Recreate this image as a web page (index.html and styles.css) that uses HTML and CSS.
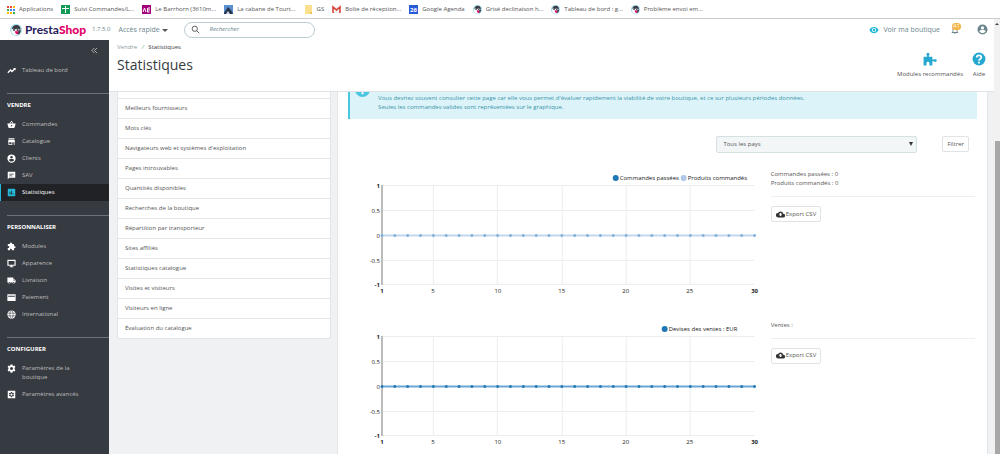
FILE: index.html
```html
<!DOCTYPE html>
<html lang="fr">
<head>
  <meta charset="UTF-8" />
  <title>Statistiques • PrestaShop</title>
  <link rel="stylesheet" href="styles.css">
</head>
<body>
  <svg class="sprite" aria-hidden="true">
    <symbol id="presta" viewBox="0 0 24 24">
      <circle cx="12" cy="12" r="12" fill="#a4dbe8" />
      <path d="M4 9c1-5 5-7 9-7 5 0 8 4 8 9l-3 3H6z" fill="#3b3b45" />
      <path d="M3 11c3-2 5-2 7 0 3-2 7-2 10 1l-2 8c-3 3-9 3-12 1-3-3-4-6-3-10z" fill="#fff" />
      <circle cx="8" cy="12" r="2" fill="#3b3b45" />
      <circle cx="15" cy="12" r="2" fill="#3b3b45" />
      <path d="M10 14l8 1-2 6-5-2z" fill="#df0067" />
      <path d="M17 12l5 1-3 7-3 1z" fill="#3b3b45" />
    </symbol>
    <symbol id="cloud" viewBox="0 0 24 24">
      <path fill-rule="evenodd" d="M19.4 10A7.5 7.5 0 0 0 5.400 8 6 6 0 0 0 6 20h13a5 5 0 0 0 .4-10zM10 16v-4H7l5-5 5 5h-3v4z" />
    </symbol>
  </svg>

  <nav class="bookmarks">
    <a href="#"><svg viewBox="0 0 9 9"><path fill="#ea4335" d="M1 1h2v2H1zM4 1h2v2H4z" /><path fill="#fbbc05" d="M7 1h2v2H7zM1 7h2v2H1zM4 7h2v2H4z" /><path fill="#34a853" d="M1 4h2v2H1zM7 7h2v2H7z" /><path fill="#4285f4" d="M4 4h2v2H4zM7 4h2v2H7z" /></svg>Applications</a>
    <a href="#"><svg viewBox="0 0 9 9"><path fill="#149a57" d="M0 0h9v9H0z" /><path fill="#fff" d="M4 1h1v2h3v1H5v4H4V4H1V3h3z" /></svg>Suivi Commandes/L...</a>
    <a href="#"><svg viewBox="0 0 9 9"><path fill="#a3007c" d="M0 0h9v9H0z" /><path fill="none" stroke="#fff" d="M1 7l1.500-4L4 7M5.500 3v4h2M7 2v4" /></svg>Le Barrhorn (3610m...</a>
    <a href="#"><svg viewBox="0 0 9 9"><path fill="#5a8fd0" d="M0 0h9v9H0z" /><path fill="#27344a" d="M0 8l4-6 3 3 2 4H0z" /><path fill="#cdd9e8" d="M2 9l2-3 2 3z" /></svg>La cabane de Tourt...</a>
    <a href="#"><svg viewBox="0 0 9 9"><path fill="#fbe08d" d="M1 0h7v9H1z" /><path fill="#eac25c" d="M6 7h2v2H6z" /></svg>GS</a>
    <a href="#"><svg viewBox="0 0 9 9"><path fill="#eee" d="M1 2h7v6H1z" /><path fill="none" stroke="#d93f33" stroke-width="1.500" d="M1 8V2l3.500 3L8 2v6" /></svg>Boîte de réception...</a>
    <a href="#"><svg viewBox="0 0 9 9"><path fill="#2a5bd7" d="M0 0h9v9H0z" /><text x="1" y="7" font-size="6" font-weight="700" fill="#fff">26</text></svg>Google Agenda</a>
    <a href="#"><svg><use href="#presta" /></svg>Grisé declinaison h...</a>
    <a href="#"><svg><use href="#presta" /></svg>Tableau de bord : g...</a>
    <a href="#"><svg><use href="#presta" /></svg>Problème envoi em...</a>
  </nav>

  <div class="window">
    <div class="app">
      <header class="topbar">
        <a class="logo" href="#"><svg><use href="#presta" /></svg><span>Presta<b>Shop</b></span></a>
        <span class="version">1.7.5.0</span>
        <button class="quick">Accès rapide <i class="caret"></i></button>
        <label class="search">
          <svg viewBox="0 0 24 24"><path fill="none" stroke="currentColor" stroke-width="2.500" d="M15 15l7 7M10 3a7 7 0 1 0 0 14 7 7 0 0 0 0-14z" /></svg>
          <input type="search" placeholder="Rechercher" aria-label="Rechercher" />
        </label>
        <a class="shop" href="#"><svg viewBox="0 0 24 24"><path d="M12 4.500C7 4.500 2.700 7.600 1 12c1.700 4.400 6 7.500 11 7.500s9.300-3.100 11-7.500c-1.700-4.400-6-7.500-11-7.500zM12 17a5 5 0 1 1 0-10 5 5 0 0 1 0 10zm0-8a3 3 0 1 0 0 6 3 3 0 0 0 0-6z" /></svg>Voir ma boutique</a>
        <button class="bell" aria-label="Notifications">
          <svg viewBox="0 0 24 24"><path d="M12 22a2 2 0 0 0 2-2h-4a2 2 0 0 0 2 2zm6-6v-5c0-3-1.600-5.600-4.500-6.300V4a1.500 1.500 0 0 0-3 0v.7C7.600 5.400 6 7.900 6 11v5l-2 2v1h16v-1zm-2 1H8v-6c0-2.500 1.500-4.500 4-4.500s4 2 4 4.500z" /></svg>
          <span class="badge">41</span>
        </button>
        <button class="user" aria-label="Mon compte"><svg viewBox="0 0 24 24"><path d="M12 1a11 11 0 1 0 0 22 11 11 0 0 0 0-22zm0 4a3.500 3.500 0 1 1 0 7 3.500 3.500 0 0 1 0-7zm0 15c-3 0-5.500-1.400-7-4 0-2.200 4.700-3 7-3s7 .8 7 3c-1.500 2.600-4 4-7 4z" /></svg></button>
      </header>

      <div class="body">
        <aside class="sidebar">
          <button class="collapse" aria-label="Réduire le menu"><svg viewBox="0 0 8 8"><path fill="none" stroke="currentColor" d="M4 1L1 4l3 3M7 1L4 4l3 3" /></svg></button>
          <a class="item" href="#"><svg viewBox="0 0 24 24"><path d="M16 5l2.300 2.300-4.900 4.900-4-4L1 16.600 3.400 19l6-6 4 4 7.300-7.300L23 12V5z" /></svg>Tableau de bord</a>

          <section>
            <h2>VENDRE</h2>
            <a class="item" href="#"><svg viewBox="0 0 24 24"><path d="M17.200 9l-4.400-6.600a1 1 0 0 0-1.600 0L6.800 9H2c-.6 0-1 .4-1 1l2.600 9.500A2 2 0 0 0 5.500 21h13a2 2 0 0 0 1.900-1.500L23 10c0-.6-.5-1-1-1zM9 9l3-4.400L15 9zm3 8a2 2 0 1 1 0-4 2 2 0 0 1 0 4z" /></svg>Commandes</a>
            <a class="item" href="#"><svg viewBox="0 0 24 24"><path d="M20 3H4v3h16zm1 11v-2l-1-5H4l-1 5v2h1v7h10v-7h4v7h2v-7zm-9 5H6v-5h6z" /></svg>Catalogue</a>
            <a class="item" href="#"><svg viewBox="0 0 24 24"><path d="M12 1a11 11 0 1 0 0 22 11 11 0 0 0 0-22zm0 4a3.500 3.500 0 1 1 0 7 3.500 3.500 0 0 1 0-7zm0 15c-3 0-5.500-1.400-7-4 0-2.200 4.700-3 7-3s7 .8 7 3c-1.500 2.600-4 4-7 4z" /></svg>Clients</a>
            <a class="item" href="#"><svg viewBox="0 0 24 24"><path d="M2 2v20l4-4h16V2zm4 5h12v2H6zm8 7H6v-2h8z" /></svg>SAV</a>
            <a class="item active" href="#"><svg viewBox="0 0 24 24"><path d="M4 2a2 2 0 0 0-2 2v16c0 1.100.9 2 2 2h16a2 2 0 0 0 2-2V4a2 2 0 0 0-2-2zm5 15H7v-7h2zm4 0h-2V7h2zm4 0h-2v-4h2z" /></svg>Statistiques</a>
          </section>

          <section>
            <h2>PERSONNALISER</h2>
            <a class="item" href="#"><svg viewBox="0 0 24 24"><path d="M20.500 11H19V7a2 2 0 0 0-2-2h-4V3.500a2.500 2.500 0 0 0-5 0V5H4a2 2 0 0 0-2 2v3.800h1.500a2.700 2.700 0 0 1 0 5.400H2V20c0 1.100.9 2 2 2h3.800v-1.500a2.700 2.700 0 0 1 5.400 0V22H17a2 2 0 0 0 2-2v-4h1.500a2.500 2.500 0 0 0 0-5z" /></svg>Modules</a>
            <a class="item" href="#"><svg viewBox="0 0 24 24"><path fill-rule="evenodd" d="M1 2h22v16h-9v2h3v2H7v-2h3v-2H1zm3 3v10h16V5z" /></svg>Apparence</a>
            <a class="item" href="#"><svg viewBox="0 0 24 24"><path d="M20 8h-3V4H1v13h2a3 3 0 0 0 6 0h6a3 3 0 0 0 6 0h2v-5zM6 18.500a1.500 1.500 0 1 1 0-3 1.500 1.500 0 0 1 0 3zm13.500-9l2 2.500H17V9.500zm-1.500 9a1.500 1.500 0 1 1 0-3 1.500 1.500 0 0 1 0 3z" /></svg>Livraison</a>
            <a class="item" href="#"><svg viewBox="0 0 24 24"><path fill-rule="evenodd" d="M1 3h22v18H1zm2 4v3h18V7z" /></svg>Paiement</a>
            <a class="item" href="#"><svg viewBox="0 0 24 24"><circle cx="12" cy="12" r="11" /><g fill="none" stroke="#363a41" stroke-width="1.500"><ellipse cx="12" cy="12" rx="4.500" ry="10" /><path d="M2 8.500h20M2 15.500h20" /></g></svg>International</a>
          </section>

          <section>
            <h2>CONFIGURER</h2>
            <a class="item" href="#"><svg viewBox="0 0 24 24"><path fill-rule="evenodd" d="M9.500 1h5l.6 3 2 1.100L20 4l2.500 4.300-2.300 2v3.400l2.300 2L20 20l-2.900-1.100-2 1.100-.6 3h-5l-.6-3-2-1.100L4 20l-2.500-4.300 2.300-2v-3.400l-2.300-2L4 4l2.900 1.100 2-1.100zM12 8a4 4 0 1 0 0 8 4 4 0 0 0 0-8z" /></svg>Paramètres de la boutique</a>
            <a class="item" href="#"><svg viewBox="0 0 24 24"><path fill-rule="evenodd" d="M2 2h20v20H2zm8.500 3l-.4 2-1.300.8-2-.7L5.300 9.700 6.800 11v2l-1.500 1.300 1.500 2.600 2-.7 1.300.8.400 2h3l.4-2 1.300-.8 2 .7 1.500-2.600-1.500-1.300v-2l1.500-1.300-1.500-2.600-2 .7-1.300-.8-.4-2zM12 9a3 3 0 1 1 0 6 3 3 0 0 1 0-6z" /></svg>Paramètres avancés</a>
          </section>
        </aside>

        <main class="main">
          <div class="page-head">
            <div>
              <nav class="breadcrumb"><a href="#">Vendre</a> <i>/</i> <a class="current" href="#">Statistiques</a></nav>
              <h1>Statistiques</h1>
            </div>
            <div class="actions">
              <a href="#"><svg viewBox="0 0 24 24"><path d="M1 8h6V6a2.500 2.500 0 1 1 3 0v2h6v5h3a2.500 2.500 0 1 1 0 3h-3v7h-5v-4a2.500 2.500 0 0 0-5 0v4H1z" /></svg>Modules recommandés</a>
              <a href="#"><svg viewBox="0 0 24 24"><circle cx="12" cy="12" r="11" /><path fill="none" stroke="#fff" stroke-width="3" d="M8 9.500c0-5 8-5 8-.5 0 3-4 3-4 6M12 16.500v3" /></svg>Aide</a>
            </div>
          </div>

          <div class="content">
            <ul class="stats">
              <li><a href="#">Meilleurs fournisseurs</a></li>
              <li><a href="#">Mots clés</a></li>
              <li><a href="#">Navigateurs web et systèmes d'exploitation</a></li>
              <li><a href="#">Pages introuvables</a></li>
              <li><a href="#">Quantités disponibles</a></li>
              <li><a href="#">Recherches de la boutique</a></li>
              <li><a href="#">Répartition par transporteur</a></li>
              <li><a href="#">Sites affiliés</a></li>
              <li><a href="#">Statistiques catalogue</a></li>
              <li><a href="#">Visites et visiteurs</a></li>
              <li><a href="#">Visiteurs en ligne</a></li>
              <li><a href="#">Évaluation du catalogue</a></li>
            </ul>

            <div class="panel">
              <div class="alert">
                <svg viewBox="0 0 16 16"><circle cx="8" cy="8" r="8" /><path fill="#fff" d="M7 3h2v2H7zM7 6h2v7H7z" /></svg>
                <p>Vous devriez souvent consulter cette page car elle vous permet d'évaluer rapidement la viabilité de votre boutique, et ce sur plusieurs périodes données.<br>Seules les commandes valides sont représentées sur le graphique.</p>
              </div>

              <form class="filter">
                <div class="select"><select aria-label="Pays"><option>Tous les pays</option></select></div>
                <button type="button" class="btn">Filtrer</button>
              </form>

              <div class="row">
                <svg class="chart" viewBox="0 0 413 131">
                  <path class="grid" d="M34 15.500h373M34 40.500h373M34 65.500h373M34 90.500h373M34 114.500h373M85.500 15v100M149.500 15v100M214.500 15v100M278.500 15v100M342.500 15v100" />
                  <path class="axis" d="M34 15v100" />
                  <path class="line light" d="M34 65.500h373" />
                  <path class="dots light" d="M34 65.500h373.100" />
                  <g class="y"><text class="b" x="32" y="18">1</text><text x="32" y="43">0.5</text><text x="32" y="68">0</text><text x="32" y="93">-0.5</text><text class="b" x="32" y="117">-1</text></g>
                  <g class="x"><text class="b" x="34" y="123">1</text><text x="85" y="123">5</text><text x="150" y="123">10</text><text x="214" y="123">15</text><text x="278" y="123">20</text><text x="342" y="123">25</text><text class="b" x="407" y="123">30</text></g>
                  <text x="272" y="10">Commandes passées</text><text x="340" y="10">Produits commandés</text>
                  <circle cx="268" cy="8" r="3" fill="#1f77b4" /><circle cx="336" cy="8" r="3" fill="#aec7e8" />
                </svg>
                <div class="side">
                  <p>Commandes passées : 0<br>Produits commandés : 0</p>
                  <hr>
                  <button class="btn"><svg><use href="#cloud" /></svg>Export CSV</button>
                </div>
              </div>

              <div class="row">
                <svg class="chart" viewBox="0 0 413 131">
                  <path class="grid" d="M34 15.500h373M34 40.500h373M34 65.500h373M34 90.500h373M34 114.500h373M85.500 15v100M149.500 15v100M214.500 15v100M278.500 15v100M342.500 15v100" />
                  <path class="axis" d="M34 15v100" />
                  <path class="line" d="M34 65.500h373" />
                  <path class="dots" d="M34 65.500h373.100" />
                  <g class="y"><text class="b" x="32" y="18">1</text><text x="32" y="43">0.5</text><text x="32" y="68">0</text><text x="32" y="93">-0.5</text><text class="b" x="32" y="117">-1</text></g>
                  <g class="x"><text class="b" x="34" y="123">1</text><text x="85" y="123">5</text><text x="150" y="123">10</text><text x="214" y="123">15</text><text x="278" y="123">20</text><text x="342" y="123">25</text><text class="b" x="407" y="123">30</text></g>
                  <text x="321" y="10">Devises des ventes : EUR</text>
                  <circle cx="317" cy="8" r="3" fill="#1f77b4" />
                </svg>
                <div class="side">
                  <p>Ventes :</p>
                  <hr>
                  <button class="btn"><svg><use href="#cloud" /></svg>Export CSV</button>
                </div>
              </div>
            </div>
          </div>
        </main>
      </div>
    </div>

    <div class="scrollbar"><i class="arrow"></i><i class="thumb"></i></div>
  </div>
</body>
</html>
```
FILE: styles.css
```css
* { box-sizing: border-box; }
body {
  margin: 0;
  height: 100vh;
  display: flex;
  flex-direction: column;
  overflow: hidden;
  font-family: "Open Sans", sans-serif;
  font-size: 6px;
  line-height: 9px;
  color: #555;
  background: #fff;
}
a { color: inherit; text-decoration: none; }
button, input, select {
  font: inherit;
  color: inherit;
  margin: 0;
  padding: 0;
  border: 0;
  background: none;
}
svg { flex: none; fill: currentColor; }
h1, h2, p, ul { margin: 0; padding: 0; }
.sprite { display: none; }

/* bookmarks */
.bookmarks {
  display: flex;
  align-items: center;
  gap: 8px;
  height: 19px;
  padding-left: 6px;
  border-bottom: 1px solid #ccc;
  white-space: nowrap;
}
.bookmarks a { display: flex; align-items: center; gap: 4px; }
.bookmarks svg { width: 9px; height: 9px; }

.window { flex: 1; display: flex; min-height: 0; }
.app { flex: 1; display: flex; flex-direction: column; min-width: 0; }

/* top bar */
.topbar {
  display: flex;
  align-items: center;
  height: 21px;
  padding: 0 6px 0 10px;
  color: #6c868e;
  font-size: 7px;
}
.logo {
  display: flex;
  align-items: center;
  gap: 3px;
  font: 700 12px/14px Lato, sans-serif;
  color: #251b5b;
}
.logo svg { width: 12px; height: 12px; }
.logo b { color: #df0067; }
.version { margin-left: 6px; font-size: 6px; }
.quick { margin-left: 8px; }
.caret {
  display: inline-block;
  border: 3px solid transparent;
  border-top-color: #555;
  border-bottom: 0;
  vertical-align: middle;
}
.search {
  display: flex;
  align-items: center;
  gap: 10px;
  width: 131px;
  height: 16px;
  margin-left: 16px;
  padding: 0 6px;
  border: 1px solid #bbcdd2;
  border-radius: 8px;
}
.search svg { width: 9px; height: 9px; color: #555; }
.search input { flex: 1; min-width: 0; outline: 0; font-size: 6px; font-style: italic; }
.search input::placeholder { color: #6c868e; }
.shop { display: flex; align-items: center; gap: 4px; margin-left: auto; }
.shop svg { width: 10px; height: 10px; color: #25b9d7; }
.bell { position: relative; height: 12px; margin-left: 10px; }
.bell svg { display: block; width: 10px; height: 12px; }
.badge {
  position: absolute;
  top: -1px;
  left: 2px;
  padding: 0 1px;
  border-radius: 4px;
  background: #f5b342;
  color: #fff;
  font-size: 6px;
  line-height: 7px;
}
.user { margin-left: 17px; }
.user svg { display: block; width: 11px; height: 11px; }

.body { flex: 1; display: flex; min-height: 0; }

/* side menu */
.sidebar {
  width: 109px;
  flex: none;
  background: #363a41;
  color: #bebebe;
}
.collapse { display: block; margin: 7px 11px 8px auto; }
.collapse svg { display: block; width: 7px; height: 7px; }
.item {
  display: flex;
  gap: 6px;
  padding: 4px 26px 4px 7px;
}
.item svg { width: 9px; height: 9px; color: #fff; }
.item.active {
  padding-left: 6px;
  border-left: 1px solid #25b9d7;
  background: #202226;
  color: #fff;
}
.item.active svg { color: #25b9d7; }
.sidebar section {
  margin-top: 14px;
  background: linear-gradient(#6c737c, #6c737c) 7px 0 / 100% 1px no-repeat;
}
.sidebar h2 {
  padding: 8px 0 6px 7px;
  font-size: 6px;
  line-height: 9px;
  font-weight: 700;
  color: #fff;
}

/* page header */
.main { flex: 1; display: flex; flex-direction: column; min-width: 0; }
.page-head {
  display: flex;
  justify-content: space-between;
  height: 52px;
  flex: none;
  padding: 3px 8px 0;
  border-bottom: 1px solid #dfe3e5;
}
.breadcrumb a { color: #8a9a9f; }
.breadcrumb .current { color: #363a41; }
.breadcrumb i { margin: 0 3px; color: #5fa85c; }
.page-head h1 { margin-top: 4px; font-size: 14px; line-height: 18px; font-weight: 400; color: #363a41; }
.actions { display: flex; gap: 9px; padding-top: 9px; }
.actions a { display: flex; flex-direction: column; align-items: center; gap: 4px; }
.actions svg { width: 14px; height: 14px; color: #25a8d0; }

/* content, scrolled under the header */
.content {
  flex: 1;
  display: grid;
  grid-template-columns: 25fr 76fr;
  align-items: start;
  gap: 6px;
  min-height: 0;
  padding: 0 6px 0 8px;
  overflow: hidden;
  background: #eff1f2;
}
.stats {
  padding-top: 6px;
  list-style: none;
  background: #fff;
  border: 1px solid #e3e6e8;
  border-top: 0;
  border-radius: 0 0 3px 3px;
}
.stats li { border-top: 1px solid #e3e6e8; }
.stats a { display: block; padding: 5px 7px; }
.panel {
  min-width: 0;
  padding: 0 10px;
  border: solid #e3e6e8;
  border-width: 0 1px;
  background: #fff;
}
.alert {
  display: flex;
  gap: 8px;
  height: 27px;
  padding: 2px 5px;
  border-left: 2px solid #4ac7e0;
  background: #dcf4f9;
  color: #3a93a8;
}
.alert svg { width: 15px; height: 15px; margin-top: -12px; color: #4ac7e0; }
.filter { display: flex; justify-content: flex-end; gap: 25px; padding: 17px 8px; }
.select { position: relative; width: 201px; }
.select::after {
  content: "";
  position: absolute;
  top: 6px;
  right: 4px;
  border: 2px solid transparent;
  border-top: 4px solid #333;
  border-bottom: 0;
  pointer-events: none;
}
.filter select {
  display: block;
  width: 100%;
  height: 17px;
  padding: 0 6px;
  appearance: none;
  border: 1px solid #d5e0e3;
  border-radius: 2px;
  background: #f3f6f7;
}
.btn {
  display: inline-flex;
  align-items: center;
  gap: 1px;
  height: 16px;
  padding: 0 4px;
  border: 1px solid #e0e2e4;
  border-radius: 2px;
  background: #fff;
}
.btn svg { width: 9px; height: 9px; color: #333; }
.row {
  display: grid;
  grid-template-columns: 2fr 1fr;
  gap: 10px;
  margin-bottom: 20px;
}
.side hr { margin: 8px 2px 9px 0; border: 0; border-top: 1px solid #eee; }

/* charts */
.chart { display: block; width: 100%; fill: #222; font-size: 6px; }
.chart .grid { fill: none; stroke: #ececec; }
.chart .axis { stroke: #bbb; stroke-width: 2; }
.chart .line { stroke: #6ba6d3; stroke-width: 2; }
.chart .line.light { stroke: #c3d7ef; }
.chart .dots {
  stroke: #1f77b4;
  stroke-width: 3;
  stroke-linecap: round;
  stroke-dasharray: 0 12.862;
}
.chart .dots.light { stroke: #7fb0db; }
.y text { text-anchor: end; }
.x text { text-anchor: middle; }
.b { font-weight: 700; }

/* window scrollbar */
.scrollbar { width: 6px; display: flex; flex-direction: column; align-items: center; background: #f1f1f1; }
.arrow { margin: 4px 0 116px; border: 2px solid transparent; border-top: 0; border-bottom-color: #444; }
.thumb { flex: 1; width: 5px; background: #a8a8a8; }
```
